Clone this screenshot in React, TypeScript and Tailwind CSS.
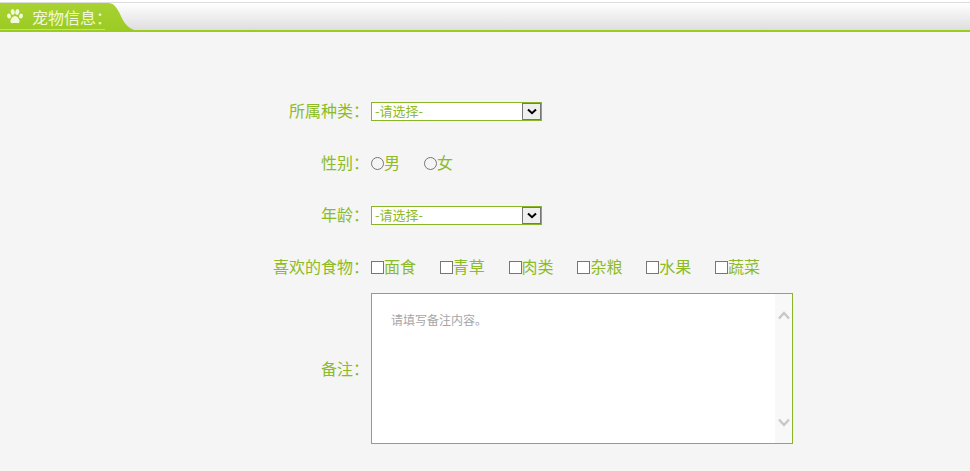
const font = "font-['Noto_Sans_CJK_SC','Noto_Sans',sans-serif]";

function Label({ children }: { children: string }) {
    return <div className="w-[369px] shrink-0 pb-[2px] text-right text-[16px] leading-[20px] text-[#8dbb25]">{children}：</div>;
}

function Select() {
    return (
        <div className="ml-[2px] flex h-[19px] w-[171px] items-center justify-between border border-[#8ab526] bg-white">
            <span className="pb-[1px] pl-[3px] text-[13px] leading-[17px] text-[#8dbb25]">-请选择-</span>
            <span className="flex h-[17px] w-[19px] items-center justify-center border border-[#767676] bg-[#efefef]">
                <svg width="10" height="7" viewBox="0 0 10 7" fill="none">
                    <path d="M1 1.5 L5 5.2 L9 1.5" stroke="#000" strokeWidth="2" />
                </svg>
            </span>
        </div>
    );
}

function Radio({ text }: { text: string }) {
    return (
        <div className="flex w-[53px] items-center">
            <span className="h-[13px] w-[13px] rounded-full border border-[#767676] bg-[#f5f5f5]" />
            <span className="pb-[2px] text-[16px] leading-[20px] text-[#8dbb25]">{text}</span>
        </div>
    );
}

function Check({ text }: { text: string }) {
    return (
        <div className="flex w-[68.8px] items-center">
            <span className="mt-[1px] h-[13px] w-[13px] border border-[#767676] bg-white" />
            <span className="pb-[2px] text-[16px] leading-[20px] text-[#8dbb25]">{text}</span>
        </div>
    );
}

export default function App() {
    return (
        <div className={`h-[471px] w-[970px] overflow-hidden bg-[#f5f5f5] ${font}`}>
            <div className="h-[2px] bg-white" />
            <div className="flex h-[30px] border-b-2 border-[#9acb1e] border-t border-t-[#dcdcdc] bg-gradient-to-b from-white to-[#dedede]">
                <div className="flex h-[27px] w-[105px] shrink-0 items-center border-b border-[#c4e270] bg-gradient-to-b from-[#a8d232] to-[#9ccb24] pl-[6px] pt-[1px]">
                    <svg width="18" height="17" viewBox="0 0 18 16" fill="#f3fad9" className="shrink-0">
                        <ellipse cx="3" cy="7.5" rx="1.9" ry="2.5" transform="rotate(-20 3 7.5)" />
                        <ellipse cx="6.7" cy="3.5" rx="2" ry="2.9" transform="rotate(-8 6.7 3.5)" />
                        <ellipse cx="11.3" cy="3.5" rx="2" ry="2.9" transform="rotate(8 11.3 3.5)" />
                        <ellipse cx="15" cy="7.5" rx="1.9" ry="2.5" transform="rotate(20 15 7.5)" />
                        <path d="M9 7.5c2.2 0 4.6 3 4.6 5.2 0 2-2 2.2-2.9 1.9-1.1-.3-2.3-.3-3.4 0-.9.3-2.9.1-2.9-1.9C4.4 10.5 6.8 7.5 9 7.5z" />
                    </svg>
                    <span className="ml-[8px] text-[16px] leading-[20px] whitespace-nowrap text-[#f1f8d6]">宠物信息：</span>
                </div>
                <svg width="30" height="27" viewBox="0 0 30 27" className="shrink-0">
                    <defs>
                        <linearGradient id="tab" x1="0" y1="0" x2="0" y2="1">
                            <stop offset="0" stopColor="#a8d232" />
                            <stop offset="1" stopColor="#9ccb24" />
                        </linearGradient>
                    </defs>
                    <path d="M0 0 H3 C9 0 11 4 14 9 C17 15 20 24 29 27 H0 Z" fill="url(#tab)" />
                </svg>
            </div>

            <div className="flex flex-col pt-[69px]">
                <div className="flex h-[20px] items-center"><Label>所属种类</Label><Select /></div>
                <div className="mt-[32px] flex h-[20px] items-center">
                    <Label>性别</Label>
                    <div className="ml-[2px] flex"><Radio text="男" /><Radio text="女" /></div>
                </div>
                <div className="mt-[32px] flex h-[20px] items-center"><Label>年龄</Label><Select /></div>
                <div className="mt-[32px] flex h-[20px] items-center">
                    <Label>喜欢的食物</Label>
                    <div className="ml-[2px] flex">
                        {['面食', '青草', '肉类', '杂粮', '水果', '蔬菜'].map(t => <Check key={t} text={t} />)}
                    </div>
                </div>
                <div className="mt-[16px] flex items-center">
                    <Label>备注</Label>
                    <div className="ml-[2px] flex h-[151px] w-[422px] border border-[#8ab526] bg-white">
                        <div className="flex-1 pl-[19px] pt-[18px] text-[12px] leading-[16px] text-[#a6a6a6]">请填写备注内容。</div>
                        <div className="flex w-[17px] flex-col items-center justify-between bg-[#f8f8f8] pb-[16px] pt-[17px]">
                            <svg width="12" height="9" viewBox="0 0 12 9" fill="none"><path d="M1 7.5 L6 2 L11 7.5" stroke="#c8c8c8" strokeWidth="2.4" /></svg>
                            <svg width="12" height="9" viewBox="0 0 12 9" fill="none"><path d="M1 1.5 L6 7 L11 1.5" stroke="#c8c8c8" strokeWidth="2.4" /></svg>
                        </div>
                    </div>
                </div>
            </div>
        </div>
    );
}
